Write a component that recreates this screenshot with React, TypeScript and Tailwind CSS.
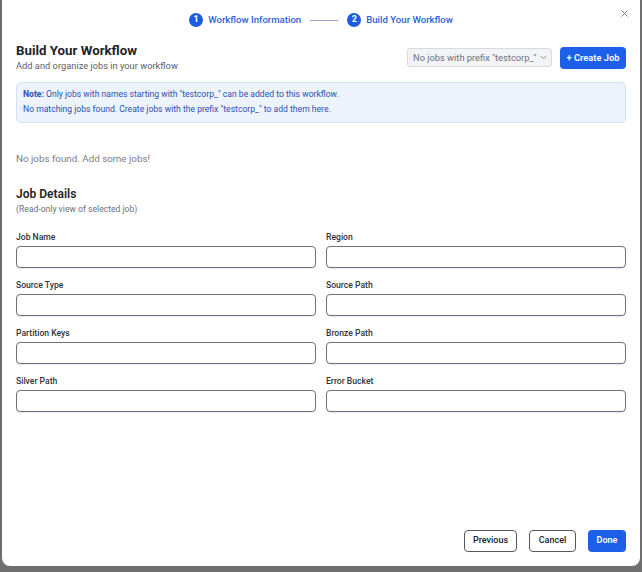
import { ChevronDown, X } from "lucide-react";

const fields = [
  ["Job Name", "Region"],
  ["Source Type", "Source Path"],
  ["Partition Keys", "Bronze Path"],
  ["Silver Path", "Error Bucket"],
];

function Step({ n, label }: { n: number; label: string }) {
  return (
    <div className="flex items-center gap-[5px]">
      <span className="flex h-[14px] w-[14px] items-center justify-center rounded-full bg-[#1d5be0] text-[9px] font-bold leading-none text-white">
        {n}
      </span>
      <span className="text-[9.6px] font-medium text-[#2a5fd6]">{label}</span>
    </div>
  );
}

export default function App() {
  return (
    <div
      className="h-[572px] w-[642px] bg-[#6f6f6f] pl-[2px]"
      style={{ fontFamily: "Roboto, 'Liberation Sans', sans-serif" }}
    >
      <div className="relative flex h-[566px] w-[638px] flex-col rounded-b-lg bg-white px-[14px] pb-[14px]">
        <button className="absolute right-[10px] top-[8px] text-gray-500">
          <X className="h-[11px] w-[11px]" strokeWidth={2} />
        </button>

        <div className="flex h-[40px] items-center justify-center gap-[7px]">
          <Step n={1} label="Workflow Information" />
          <span className="mx-[2px] h-px w-[28px] bg-[#9aa5c4]" />
          <Step n={2} label="Build Your Workflow" />
        </div>

        <div className="mt-[3px] flex items-center justify-between">
          <div>
            <h1 className="text-[13.3px] font-bold leading-[16px] text-[#1f2329]">Build Your Workflow</h1>
            <p className="mt-[1px] text-[9.3px] leading-[12px] text-[#5b6069]">
              Add and organize jobs in your workflow
            </p>
          </div>
          <div className="flex items-center gap-[8px]">
            <div className="flex h-[19px] w-[145px] items-center justify-between rounded-[3px] border border-[#d7dade] bg-[#f3f4f6] pl-[5px] pr-[3px] text-[9.3px] text-[#6b7280]">
              <span>No jobs with prefix "testcorp_"</span>
              <ChevronDown className="h-[9px] w-[9px] text-gray-500" strokeWidth={2} />
            </div>
            <button className="h-[22px] w-[66px] rounded-[4px] bg-[#1d5fe8] text-[9.3px] font-semibold text-white">
              + Create Job
            </button>
          </div>
        </div>

        <div className="mt-[10px] rounded-[5px] border border-[#d3e2f7] bg-[#eef4fd] px-[6px] pb-[5px] pt-[4px] text-[8.6px] leading-[15px] text-[#2d4fae]">
          <p>
            <span className="font-bold">Note:</span> Only jobs with names starting with "testcorp_" can be added to this
            workflow.
          </p>
          <p>No matching jobs found. Create jobs with the prefix "testcorp_" to add them here.</p>
        </div>

        <p className="mt-[29px] text-[9.8px] leading-[14px] text-[#7b8088]">No jobs found. Add some jobs!</p>

        <h2 className="mt-[21px] text-[12px] font-semibold leading-[14px] text-[#1f2329]">Job Details</h2>
        <p className="mt-[2px] text-[8.6px] leading-[12px] text-[#6b7280]">(Read-only view of selected job)</p>

        <div className="mt-[16px] grid grid-cols-2 gap-x-[10px] gap-y-[11px]">
          {fields.flat().map((f) => (
            <div key={f} className="flex flex-col">
              <label className="text-[8.6px] font-medium leading-[12px] text-[#2f343b]">{f}</label>
              <div className="mt-[3px] h-[22px] rounded-[4px] border border-[#6d7178] bg-white shadow-[0_1px_1px_rgba(0,0,0,0.08)]" />
            </div>
          ))}
        </div>

        <div className="mt-auto flex justify-end gap-[12px]">
          <button className="h-[22px] w-[53px] rounded-[4px] border border-[#55595f] bg-white text-[9px] font-medium text-[#222]">
            Previous
          </button>
          <button className="h-[22px] w-[47px] rounded-[4px] border border-[#55595f] bg-white text-[9px] font-medium text-[#222]">
            Cancel
          </button>
          <button className="h-[22px] w-[38px] rounded-[4px] bg-[#1d5fe8] text-[9px] font-semibold text-white">
            Done
          </button>
        </div>
      </div>
    </div>
  );
}
